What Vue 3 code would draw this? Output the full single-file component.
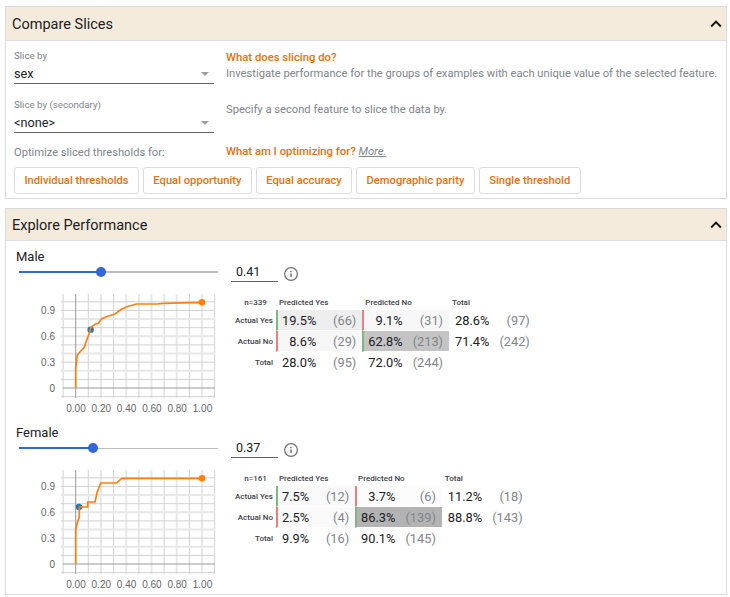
<script setup>
const X0 = 75.7, SX = 12.63, Y0 = 94, SY = 8.62
const ks = Array.from({ length: 13 }, (_, i) => i - 1)
const isDark = k => k % 2 !== 0 || k === 10
const vLines = ks.filter(k => k !== 0).map(k => ({ k, x: +(X0 + SX * k).toFixed(1), dark: isDark(k) }))
const hLines = ks.filter(k => k !== 0).map(k => ({ k, y: +(Y0 - SY * k).toFixed(1), dark: isDark(k) }))
const xLabels = ['0.00', '0.20', '0.40', '0.60', '0.80', '1.00']
const yLabels = [['0.9', 0.9], ['0.6', 0.6], ['0.3', 0.3], ['0', 0]]

const toPath = (pts, oy) => pts.map(([x, y]) => `${(x / 3).toFixed(1)},${(y / 3 + oy).toFixed(1)}`).join(' ')

const groups = [
  {
    name: 'Male', threshold: '0.41', pos: 41, thick: true, n: 'n=339', top: 292 / 3 + 205 - 294,
    curve: toPath([[227,549],[227,490],[232,450],[245,435],[252,428],[260,405],[268,385],[272,368],[285,358],[295,355],[305,341],[325,333],[345,327],[365,312],[385,304],[410,297],[470,297],[490,295],[606,292]], 205 - 294),
    dot: [272 / 3, 374 / 3 + 205 - 294],
    rows: [
      { label: 'Actual Yes', cells: [['19.5%', '(66)', 'good', '#eeeeee'], ['9.1%', '(31)', 'bad', '#f7f7f7']], total: ['28.6%', '(97)'] },
      { label: 'Actual No', cells: [['8.6%', '(29)', 'bad', '#f7f7f7'], ['62.8%', '(213)', 'good', '#c4c4c4']], total: ['71.4%', '(242)'] }
    ],
    totals: [['28.0%', '(95)'], ['72.0%', '(244)']]
  },
  {
    name: 'Female', threshold: '0.37', pos: 37, thick: false, n: 'n=161', top: 175 / 3 + 420 - 470,
    curve: toPath([[227,432],[227,330],[232,308],[238,290],[238,261],[263,261],[263,246],[285,246],[292,215],[302,189],[350,189],[365,175],[606,175]], 420 - 470),
    dot: [237 / 3, 261 / 3 + 420 - 470],
    rows: [
      { label: 'Actual Yes', cells: [['7.5%', '(12)', 'good', '#f9f9f9'], ['3.7%', '(6)', 'bad', '#fcfcfc']], total: ['11.2%', '(18)'] },
      { label: 'Actual No', cells: [['2.5%', '(4)', 'bad', '#fafafa'], ['86.3%', '(139)', 'good', '#b3b3b3']], total: ['88.8%', '(143)'] }
    ],
    totals: [['9.9%', '(16)'], ['90.1%', '(145)']]
  }
]
const buttons = ['Individual thresholds', 'Equal opportunity', 'Equal accuracy', 'Demographic parity', 'Single threshold']
</script>

<template>
  <div class="page">
    <section class="panel first">
      <header class="head">
        <span class="title">Compare Slices</span>
        <svg class="chev" width="22" height="22" viewBox="0 0 24 24"><path d="M12 8l-6 6 1.41 1.41L12 10.83l4.59 4.58L18 14z" /></svg>
      </header>
      <div class="slice-body">
        <div class="config-row r1">
          <div class="field">
            <div class="flabel">Slice by</div>
            <div class="select"><span>sex</span><i class="tri"></i></div>
          </div>
          <div class="help">
            <div class="orange">What does slicing do?</div>
            <div class="desc">Investigate performance for the groups of examples with each unique value of the selected feature.</div>
          </div>
        </div>
        <div class="config-row r2">
          <div class="field">
            <div class="flabel">Slice by (secondary)</div>
            <div class="select"><span>&lt;none&gt;</span><i class="tri"></i></div>
          </div>
          <div class="help second"><div class="desc">Specify a second feature to slice the data by.</div></div>
        </div>
        <div class="config-row r3">
          <div class="field opt">Optimize sliced thresholds for:</div>
          <div class="help"><span class="orange">What am I optimizing for?</span> <a class="more">More.</a></div>
        </div>
        <div class="btns">
          <button v-for="b in buttons" :key="b" class="btn">{{ b }}</button>
        </div>
      </div>
    </section>

    <section class="panel second-panel">
      <header class="head low">
        <span class="title">Explore Performance</span>
        <svg class="chev" width="22" height="22" viewBox="0 0 24 24"><path d="M12 8l-6 6 1.41 1.41L12 10.83l4.59 4.58L18 14z" /></svg>
      </header>
      <div v-for="g in groups" :key="g.name" class="group">
        <div class="gname">{{ g.name }}</div>
        <div class="slide-row">
          <div class="slider" :class="{ thin: !g.thick }">
            <div class="fill" :style="{ width: g.pos + '%' }"></div>
            <div class="thumb" :style="{ left: g.pos + '%' }"></div>
          </div>
          <div class="num">{{ g.threshold }}</div>
          <svg class="info" width="16" height="16" viewBox="0 0 16 16">
            <circle cx="8" cy="8" r="6.4" fill="none" stroke="#757575" stroke-width="1.3" />
            <rect x="7.3" y="7.2" width="1.4" height="4" fill="#757575" />
            <rect x="7.3" y="4.8" width="1.4" height="1.4" fill="#757575" />
          </svg>
        </div>
        <div class="lower">
          <svg class="chart" width="218" height="122" viewBox="0 0 218 122">
            <line v-for="l in vLines" :key="l.k" :x1="l.x" :x2="l.x" y1="0" y2="104" :stroke="l.dark ? '#d2d2d2' : '#e8e8e8'" :stroke-width="l.dark ? 1 : 2" />
            <line v-for="l in hLines" :key="l.k" x1="61" x2="215" :y1="l.y" :y2="l.y" :stroke="l.dark ? '#d2d2d2' : '#e8e8e8'" :stroke-width="l.dark ? 1 : 2" />
            <line :x1="X0" :x2="X0" y1="0" y2="104" stroke="#999" stroke-width="1" />
            <line x1="63" x2="215" :y1="Y0" :y2="Y0" stroke="#999" stroke-width="1" />
            <text v-for="(t, i) in xLabels" :key="t" class="tick" text-anchor="middle" :x="76 + i * 25.3" y="118">{{ t }}</text>
            <text v-for="t in yLabels" :key="t[0]" class="tick" text-anchor="end" x="55" :y="Y0 - t[1] * 86.2 + 3.5">{{ t[0] }}</text>
            <circle :cx="g.dot[0]" :cy="g.dot[1]" r="3.2" fill="#1f77b4" />
            <polyline :points="g.curve" fill="none" stroke="#ff7f0e" stroke-width="1.7" />
            <circle cx="202" :cy="g.top" r="3.3" fill="#ff7f0e" />
          </svg>
          <table class="matrix">
            <tbody>
              <tr class="hd">
                <th class="n">{{ g.n }}</th>
                <th colspan="2">Predicted Yes</th>
                <th colspan="2">Predicted No</th>
                <th colspan="2">Total</th>
              </tr>
              <tr v-for="r in g.rows" :key="r.label">
                <th class="rl">{{ r.label }}</th>
                <template v-for="c in r.cells" :key="c[0]">
                  <td class="p" :class="c[2]" :style="{ background: c[3] }">{{ c[0] }}</td>
                  <td class="c" :style="{ background: c[3] }">{{ c[1] }}</td>
                </template>
                <td class="p plain">{{ r.total[0] }}</td>
                <td class="c">{{ r.total[1] }}</td>
              </tr>
              <tr>
                <th class="rl">Total</th>
                <template v-for="c in g.totals" :key="c[0]">
                  <td class="p plain">{{ c[0] }}</td>
                  <td class="c">{{ c[1] }}</td>
                </template>
                <td colspan="2"></td>
              </tr>
            </tbody>
          </table>
        </div>
      </div>
    </section>
  </div>
</template>

<style>
body { margin: 0; background: #fff; }
</style>

<style scoped>
.page {
  width: 722px;
  padding: 6px 3px 0 5px;
  font-family: Roboto, sans-serif;
  color: #202124;
}
.panel { border: 1px solid #dadada; box-sizing: border-box; }
.first { height: 193px; }
.second-panel { margin-top: 9px; height: 387px; }
.head {
  height: 33px;
  background: #f5ebdc;
  border-bottom: 1px solid #dedede;
  display: flex;
  align-items: center;
  justify-content: space-between;
  padding: 0 0 0 6px;
  font-size: 14.5px;
  color: #202124;
}
.title { padding-top: 2px; }
.head.low { height: 31px; }
.chev { margin-right: -1px; fill: #111; }
.slice-body { padding: 8px 8px 0; }
.config-row { display: flex; }
.field { width: 200px; flex: none; }
.r1 { height: 46px; }
.r1 .help { padding-top: 2px; }
.r1 .desc { margin-top: 3px; }
.r2 { height: 47px; padding-top: 3px; }
.r3 { height: 20px; font-size: 11.3px; }
.flabel { font-size: 9.7px; color: #80868b; line-height: 14px; }
.select {
  height: 19px;
  margin-top: 1px;
  border-bottom: 1px solid #5f6368;
  display: flex;
  justify-content: space-between;
  align-items: center;
  font-size: 12.7px;
  color: #202124;
}
.tri {
  width: 0;
  height: 0;
  margin-right: 5px;
  border-left: 4px solid transparent;
  border-right: 4px solid transparent;
  border-top: 4px solid #9e9e9e;
}
.help { margin-left: 12px; font-size: 11.2px; color: #80868b; }
.help.second { padding-top: 3px; }
.orange { color: #e8710a; font-weight: 500; font-size: 11.3px; }
.desc { margin-top: 2px; white-space: nowrap; }
.opt { color: #80868b; font-size: 11.15px; line-height: 16px; }
.more { text-decoration: underline; font-style: italic; color: #80868b; }
.btns { display: flex; gap: 4px; margin-top: 2px; }
.btn {
  height: 27px;
  padding: 0 9.4px;
  border: 1px solid #dadce0;
  border-radius: 3px;
  background: #fff;
  color: #e8710a;
  font: 500 11.2px Roboto, sans-serif;
}
.group { padding: 0 0 0 10px; height: 176px; }
.gname { font-size: 13px; line-height: 16px; padding-top: 8px; color: #202124; }
.slide-row { display: flex; align-items: center; height: 20px; margin-top: -3px; }
.slider {
  position: relative;
  width: 199px;
  height: 2px;
  margin-left: 3px;
  background: #bdbdbd;
}
.slider.thin { background: linear-gradient(#bdbdbd 0 0) 0 50% / 100% 1px no-repeat; }
.fill { position: absolute; left: 0; top: 0; height: 2px; background: #3367d6; }
.thumb {
  position: absolute;
  top: -4px;
  width: 10px;
  height: 10px;
  margin-left: -5px;
  border-radius: 50%;
  background: #3367d6;
}
.num {
  width: 42px;
  margin-left: 13px;
  padding-left: 5px;
  font-size: 12.5px;
  line-height: 19px;
  border-bottom: 1px solid #5f6368;
  color: #202124;
}
.info { margin-left: 5px; margin-top: 4px; }
.lower { display: flex; align-items: flex-start; margin-left: -16px; padding-top: 12px; }
.chart { flex: none; }
.tick { font: 10px "Liberation Sans", Arial, sans-serif; fill: #666; }
.matrix { border-collapse: separate; border-spacing: 0; margin-top: 0; margin-left: 17px; }
.matrix th {
  font-size: 8px;
  font-weight: 500;
  color: #3c4043;
  padding: 0;
  white-space: nowrap;
}
.hd th { height: 16px; text-align: left; padding-left: 3px; }
.hd th.n { text-align: center; padding: 0; width: 40px; }
.rl { text-align: right; padding-right: 3px !important; height: 20px; }
.matrix td {
  font-size: 12.8px;
  height: 20px;
  padding: 0;
  border-bottom: 1px solid #fff;
  white-space: nowrap;
}
.p { text-align: right; padding-left: 4px !important; border-left: 2px solid transparent; color: #202124; }
.p.good { border-left-color: #7fb685; }
.p.bad { border-left-color: #ea8080; }
.c { text-align: right; width: 30px; padding-left: 10px !important; padding-right: 6px !important; color: #80868b; box-sizing: content-box; }
</style>
